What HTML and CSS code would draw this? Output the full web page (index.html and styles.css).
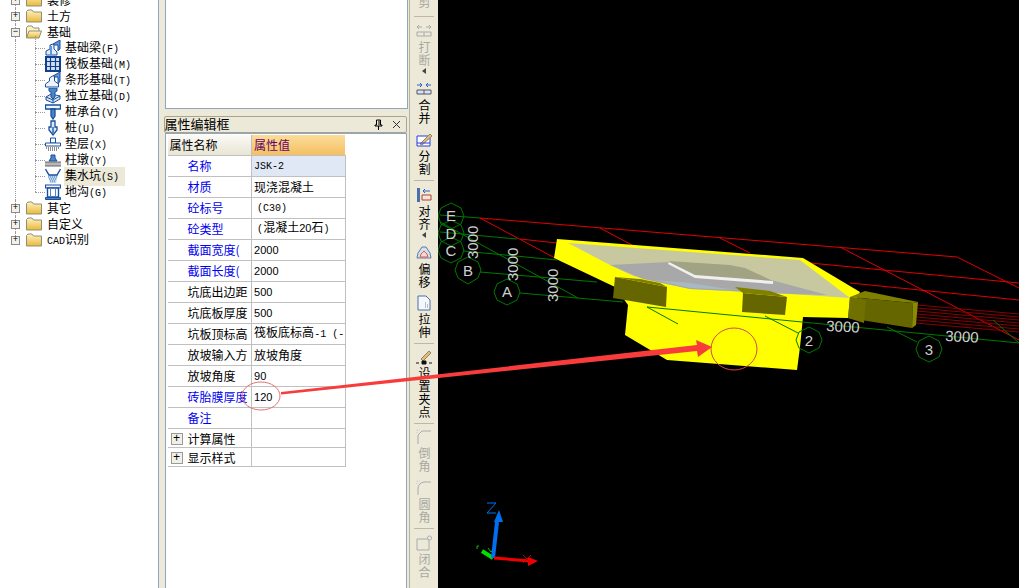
FILE: index.html
```html
<!DOCTYPE html>
<html lang="en">
<head>
    <meta charset="UTF-8">
    <meta name="viewport" content="width=device-width, initial-scale=1.0">
    <title>属性编辑框</title>
    <link rel="stylesheet" href="styles.css">
</head>
<body>
<div class="app">
    <!-- component tree -->
    <div class="tree">
        <div class="row cut"><span class="box">+</span><svg class="folder" viewBox="0 0 16 14"><use href="#folder"/></svg><span>装修</span></div>
        <div class="row"><span class="box">+</span><svg class="folder" viewBox="0 0 16 14"><use href="#folder"/></svg><span>土方</span></div>
        <div class="row"><span class="box">−</span><svg class="folder" viewBox="0 0 16 14"><use href="#folder-open"/></svg><span>基础</span></div>

        <div class="children">
            <div class="leaf"><svg class="ic" viewBox="0 0 16 16"><path d="M8 4l7-4v9l-2 2V5H9z" fill="#5f9ad8" stroke="#1a4f9c"/><path d="M1 15v-4l4-2V5l3-1 1 1v4l3 3v3z" fill="#e4eefa" stroke="#1a4f9c"/><path d="M6 6v9" stroke="#5f9ad8" stroke-width="2"/></svg><span>基础梁<i>(F)</i></span></div>
            <div class="leaf"><svg class="ic" viewBox="0 0 16 16"><path d="M1 1h14v14H1z" fill="#cfe0f2" stroke="#123f8c" stroke-width="2"/><path d="M5.500 1v14M10.500 1v14M1 5.500h14M1 10.500h14" stroke="#123f8c" stroke-width="1.200" fill="none"/></svg><span>筏板基础<i>(M)</i></span></div>
            <div class="leaf"><svg class="ic" viewBox="0 0 16 16"><path d="M8 4l7-4v9l-2 3V5H9z" fill="#5f9ad8" stroke="#1a4f9c"/><path d="M0.500 15v-3l4-3V6l3-2h2v5l4 3v3z" fill="#eef4fc" stroke="#1a4f9c"/></svg><span>条形基础<i>(T)</i></span></div>
            <div class="leaf"><svg class="ic" viewBox="0 0 16 16"><path d="M1 9l5-3 9 2v3l-7 4-7-3z" fill="#d4e4f6" stroke="#1a4f9c"/><path d="M4 0h8v3l-2 1v5l-2 2-2-2V4L4 3z" fill="#4a86c8" stroke="#1a4f9c"/><path d="M1 9l7 3 7-4M8 12v3" fill="none" stroke="#1a4f9c"/></svg><span>独立基础<i>(D)</i></span></div>
            <div class="leaf"><svg class="ic" viewBox="0 0 16 16"><path d="M0.500 1h15v4H0.500z" fill="#eef4fc" stroke="#1a4f9c" stroke-width="1.300"/><path d="M6 5h4v7l-2 3-2-3z" fill="#4a86c8" stroke="#1a4f9c" stroke-width="1.300"/></svg><span>桩承台<i>(V)</i></span></div>
            <div class="leaf"><svg class="ic" viewBox="0 0 16 16"><path d="M6 1h4v6h2v3l-4 5-4-5V7h2z" fill="#dce8f6" stroke="#1a4f9c" stroke-width="1.300"/><path d="M8 7v6" stroke="#4a86c8" stroke-width="2"/></svg><span>桩<i>(U)</i></span></div>
            <div class="leaf"><svg class="ic" viewBox="0 0 16 16"><path d="M5.500 2h5v5h-5z" fill="#fff" stroke="#1a4f9c"/><path d="M0.500 7h15v3h-15z" fill="#fff" stroke="#1a4f9c"/><path d="M1 12h14M3 14h10" stroke="#666" stroke-dasharray="1 1" stroke-width="1.500"/></svg><span>垫层<i>(X)</i></span></div>
            <div class="leaf"><svg class="ic" viewBox="0 0 16 16"><path d="M6 3h4v3l2 3H4l2-3z" fill="#4a86c8" stroke="#1a4f9c"/><path d="M0 10h16v4H0z" fill="#b8b8b8"/><path d="M0 10h16M0 14h16" stroke="#666"/></svg><span>柱墩<i>(Y)</i></span></div>
            <div class="leaf"><svg class="ic" viewBox="0 0 16 16"><path d="M3 7h10l-2 8H5z" fill="#bcd6f0"/><path d="M3 9h10M4 11h8M5 13h6" stroke="#3a78c0" stroke-dasharray="1 1"/><path d="M0.500 1L4 7h8l3.500-6" fill="none" stroke="#1a4f9c" stroke-width="1.400"/></svg><span class="selected">集水坑<i>(S)</i></span></div>
            <div class="leaf"><svg class="ic" viewBox="0 0 16 16"><path d="M0.500 1h15v3H0.500z" fill="#eef4fc" stroke="#1a4f9c" stroke-width="1.200"/><path d="M2.500 4h11v9h-11z" fill="#fff" stroke="#1a4f9c" stroke-width="1.400"/><path d="M5.500 4v9M10.500 4v9" stroke="#4a86c8"/><path d="M0.500 13.500h15v2h-15z" fill="#4a86c8" stroke="#1a4f9c"/></svg><span>地沟<i>(G)</i></span></div>
        </div>

        <div class="row"><span class="box">+</span><svg class="folder" viewBox="0 0 16 14"><use href="#folder"/></svg><span>其它</span></div>
        <div class="row"><span class="box">+</span><svg class="folder" viewBox="0 0 16 14"><use href="#folder"/></svg><span>自定义</span></div>
        <div class="row last"><span class="box">+</span><svg class="folder" viewBox="0 0 16 14"><use href="#folder"/></svg><span><i>CAD</i>识别</span></div>
    </div>

    <!-- middle panels -->
    <div class="middle">
        <div class="blank"></div>
        <div class="titlebar">
            <span class="title">属性编辑框</span>
            <span class="pin">
                <svg viewBox="0 0 9 11" width="9" height="11"><path d="M2.500 1h4v5h1.500v1H1V6h1.500zM4.500 7v4M5 1.500v4.500" fill="none" stroke="#000"/></svg>
                <svg viewBox="0 0 9 9" width="9" height="9"><path d="M1 1l7 7M8 1L1 8" stroke="#333"/></svg>
            </span>
        </div>
        <div class="props">
            <table>
                <tr class="head"><th class="h1">属性名称</th><th class="h2">属性值</th></tr>
                <tr><td class="k blue">名称</td><td class="v current"><i>JSK-2</i></td></tr>
                <tr><td class="k blue">材质</td><td class="v">现浇混凝土</td></tr>
                <tr><td class="k blue">砼标号</td><td class="v inset"><i>(C30)</i></td></tr>
                <tr><td class="k blue">砼类型</td><td class="v inset"><i>(</i>混凝土<u>20</u>石<i>)</i></td></tr>
                <tr><td class="k blue">截面宽度(</td><td class="v"><u>2000</u></td></tr>
                <tr><td class="k blue">截面长度(</td><td class="v"><u>2000</u></td></tr>
                <tr><td class="k">坑底出边距</td><td class="v"><u>500</u></td></tr>
                <tr><td class="k">坑底板厚度</td><td class="v"><u>500</u></td></tr>
                <tr><td class="k">坑板顶标高</td><td class="v">筏板底标高<i>-1 (-</i></td></tr>
                <tr><td class="k">放坡输入方</td><td class="v">放坡角度</td></tr>
                <tr><td class="k">放坡角度</td><td class="v"><u>90</u></td></tr>
                <tr><td class="k blue">砖胎膜厚度</td><td class="v"><u>120</u></td></tr>
                <tr><td class="k blue">备注</td><td class="v"></td></tr>
                <tr class="group"><td class="k"><span class="plus">+</span>计算属性</td><td class="v"></td></tr>
                <tr class="group"><td class="k"><span class="plus">+</span>显示样式</td><td class="v"></td></tr>
            </table>
        </div>
    </div>

    <!-- vertical toolbar -->
    <div class="toolbar">
        <div class="tool off first"><b>剪</b></div>
        <div class="sep"></div>
        <div class="tool off"><svg viewBox="0 0 16 16"><path d="M1 4h5M3 2L1 4l2 2M15 4h-5M13 2l2 2-2 2" fill="none" stroke="#aaa"/><path d="M1 9h14v4H1zM8 9v4" fill="none" stroke="#aaa"/></svg><b>打断</b><em class="arrow"></em></div>
        <div class="tool"><svg viewBox="0 0 16 16"><path d="M1 4h5M4 2l2 2-2 2M15 4h-5M12 2l-2 2 2 2" fill="none" stroke="#2a62c8"/><path d="M1 9h14v4H1zM8 9v4" fill="#d8e4f4" stroke="#556"/></svg><b>合并</b></div>
        <div class="tool pad7"><svg viewBox="0 0 16 16"><path d="M1 4h13v10H1z" fill="#fff" stroke="#2a3ae0"/><path d="M4 12L14 2l2 2L6 13z" fill="#e8b878" stroke="#886"/><path d="M1 11h13" stroke="#2a3ae0"/></svg><b>分割</b></div>
        <div class="sep"></div>
        <div class="tool"><svg viewBox="0 0 16 16"><path d="M1 1h3v14H1z" fill="#4a6ea8"/><path d="M6 8h9v5H6z" fill="#f4e8d8" stroke="#b04030"/><path d="M14 4H7M9 2L7 4l2 2" fill="none" stroke="#2a62c8"/></svg><b>对齐</b><em class="arrow"></em></div>
        <div class="tool"><svg viewBox="0 0 16 16"><path d="M1 13l1-5 4-6h4l4 6 1 5z" fill="#d4dff0" stroke="#5a7aa8"/><path d="M4 12l1-3 3-3 3 3 1 3z" fill="#f4d8d0" stroke="#d06050"/></svg><b>偏移</b></div>
        <div class="tool"><svg viewBox="0 0 16 16"><path d="M2 1h8l4 4v10H2z" fill="#f4f8fc" stroke="#4a6ea8"/><path d="M9 8h2M9 10h3M9 12h4" stroke="#789" stroke-dasharray="1 1"/></svg><b>拉伸</b></div>
        <div class="sep"></div>
        <div class="tool pad5"><svg viewBox="0 0 16 16"><path d="M5 10L13 2l2 2-8 8z" fill="#e8b878" stroke="#886"/><path d="M0 14h3M6 12h4v3H6zM13 14h3" stroke="#111" fill="#111"/></svg><b>设置夹点</b></div>
        <div class="sep"></div>
        <div class="tool off pad5"><svg viewBox="0 0 16 16"><path d="M2 15V6l4-4h9" fill="none" stroke="#aaa"/><path d="M1 1h4M1 1v4" stroke="#ccc" stroke-dasharray="1 1"/></svg><b>倒角</b></div>
        <div class="tool off pad7"><svg viewBox="0 0 16 16"><path d="M2 15V9q0-6 6-7h7" fill="none" stroke="#aaa"/><path d="M1 1h4M1 1v4" stroke="#ccc" stroke-dasharray="1 1"/></svg><b>圆角</b></div>
        <div class="sep"></div>
        <div class="tool off"><svg viewBox="0 0 16 16"><path d="M1 4h12v11H1z" fill="none" stroke="#aaa"/><circle cx="13.500" cy="3" r="2" fill="#eee" stroke="#aaa"/></svg><b>闭合</b></div>
    </div>

    <!-- 3D drawing -->
    <div class="view">
        <svg class="scene" viewBox="438 0 581 588" width="581" height="588">
            <g fill="none" stroke="#e00000">
                <path d="M480 218L957 257L1019 288M520 239L557 243M810 263L1019 283M850 283L1019 300M480 218L555 258M600 228L632 245M720 238L750 253M840 247L1019 340"/>
            </g>
            <g fill="none" stroke="#8a0000">
                <path d="M917 305L1019 314M917 308L1019 317M917 311L1019 320M917 314L1019 323M917 317L1019 326M917 320L1019 329M915 323L1019 332"/>
            </g>

            <!-- foundation pit -->
            <path d="M557 239L803 258L860 292L848 318L803 317L800 347L797 370L667 360L625 335L628 305L615 287L554 258z" fill="#ff0"/>
            <path d="M568 243L800 260L850 298L790 294L690 289L633 276L610 265z" fill="#c8c8a0"/>
            <path d="M610 265L668 262L775 281L827 295L790 294L730 291L690 289L643 279z" fill="#a8a8a8"/>
            <path d="M668 261L730 265L745 268L773 281L694 276z" fill="#a2a284"/>
            <path d="M669 262L695 275L773 281L773 284L695 278L668 264z" fill="#f0f0f0"/>
            <path d="M655 280L690 283L735 290L690 288z" fill="#a8b8c4"/>
            <path d="M615 277L667 287L666 307L613 298z" fill="#666600"/>
            <path d="M615 277L640 279L660 283L667 287z" fill="#808000"/>
            <path d="M743 293L787 297L785 315L742 312z" fill="#666600"/>
            <path d="M735 287L770 291L787 297L743 293z" fill="#808000"/>
            <path d="M850 297L865 291L918 302L913 303z" fill="#808000"/>
            <path d="M850 297L913 303L912 328L848 318z" fill="#666600"/>
            <path d="M850 297L866 300L864 323L848 318z" fill="#707000"/>
            <path d="M913 303L918 302L916 325L912 328z" fill="#8a8a00"/>

            <g fill="none" stroke="#007a00">
                <path d="M440 215L480 218M440 232L517 239M463 251L557 260M480 272L597 282M520 293L623 302M647 307L1019 343M440 222L578 298M647 307L678 324M765 316L798 333M887 327L917 342M993 320L1019 343"/>
                <path d="M451 203L461 208L464 216L461 224L451 229L441 224L438 216L441 208z"/>
                <path d="M451 220L461 225L464 233L461 241L451 246L441 241L438 233L441 225z"/>
                <path d="M451 237L461 242L464 250L461 258L451 263L441 258L438 250L441 242z"/>
                <path d="M468 257L478 262L481 270L478 278L468 284L458 278L455 270L458 262z"/>
                <path d="M507 279L517 284L520 292L517 300L507 305L497 300L494 292L497 284z"/>
                <path d="M809 327L819 332L822 340L819 348L809 353L799 348L796 340L799 332z"/>
                <path d="M929 336L939 341L942 349L939 357L929 362L919 357L916 349L919 341z"/>
            </g>
            <g class="grid-text">
                <text x="451" y="221">E</text>
                <text x="451" y="239">D</text>
                <text x="451" y="256">C</text>
                <text x="468" y="276">B</text>
                <text x="507" y="297">A</text>
                <text x="809" y="346">2</text>
                <text x="929" y="355">3</text>
                <text transform="translate(478 259) rotate(-90)">3000</text>
                <text transform="translate(518 281) rotate(-90)">3000</text>
                <text transform="translate(558 302) rotate(-90)">3000</text>
                <text transform="translate(826 331) rotate(3)">3000</text>
                <text transform="translate(945 341) rotate(3)">3000</text>
            </g>

            <!-- axes -->
            <path d="M482 551L493 558" stroke="#00e000" stroke-width="4"/>
            <path d="M477 549v-3h2M488 548l3 4 4-4" fill="none" stroke="#00c000"/>
            <path d="M493 558L497 522" stroke="#0070f0" stroke-width="4"/>
            <path d="M499 510L503 522H494z" fill="#0070f0"/>
            <path d="M487 503h9L487 513h9" fill="none" stroke="#0070f0"/>
            <path d="M494 558L530 561" stroke="#f00000" stroke-width="3"/>
            <path d="M538 561L528 557V566z" fill="#f00000"/>
            <path d="M523 555l8 8M531 555l-8 8" stroke="#c00000"/>
        </svg>
    </div>
</div>

<!-- annotation drawn over the screenshot -->
<svg class="marks" viewBox="0 0 1019 588" width="1019" height="588">
    <ellipse cx="261" cy="396" rx="19" ry="14" fill="none" stroke="#e87070"/>
    <ellipse cx="734" cy="349" rx="23" ry="21" fill="none" stroke="#d84848"/>
    <path d="M281 392L697 345L696 340L712 347L698 357L697 351L281 394.500z" fill="#f83c3c"/>
</svg>

<svg class="defs" width="0" height="0">
    <defs>
        <linearGradient id="fg" x1="0" y1="0" x2="0" y2="1"><stop offset="0" stop-color="#fff3c4"/><stop offset="1" stop-color="#e8b838"/></linearGradient>
        <symbol id="folder" viewBox="0 0 16 14"><path d="M.5 13V2.500L2 1h4l1.500 2H15.500V13z" fill="url(#fg)" stroke="#8f8f78"/></symbol>
        <symbol id="folder-open" viewBox="0 0 16 14"><path d="M.5 13V2.500L2 1h4l1.500 2H13V6" fill="#fff3c4" stroke="#8f8f78"/><path d="M.5 13L3 6h12.500L13 13z" fill="url(#fg)" stroke="#8f8f78"/></symbol>
    </defs>
</svg>
</body>
</html>
```

FILE: styles.css
```css
* {
    box-sizing: border-box;
    margin: 0;
    padding: 0;
}

html, body {
    width: 1019px;
    height: 588px;
    overflow: hidden;
}

body {
    position: relative;
    font-family: "Noto Sans CJK SC", "Liberation Sans", sans-serif;
    font-size: 12px;
    color: #000;
    background: #ece9d8;
}

i {
    font-family: "Liberation Mono", monospace;
    font-size: 10px;
    font-style: normal;
}

/* plain digits in the value column */
u {
    font-family: "Liberation Sans", sans-serif;
    font-size: 11px;
    text-decoration: none;
}

.app {
    display: flex;
    height: 588px;
}

/* tree */
.tree {
    width: 159px;
    background: #fff;
    border-right: 1px solid #8fa6c0;
    padding-top: 0;
    overflow: hidden;
}

.row {
    display: flex;
    align-items: center;
    height: 16px;
    line-height: 16px;
    padding-left: 11px;
    position: relative;
}

.row.cut {
    margin-top: -8px;
}

.row::before {
    content: "";
    position: absolute;
    left: 15px;
    top: 0;
    bottom: 0;
    border-left: 1px dotted #999;
}

.row.last::before {
    bottom: 8px;
}

.box {
    width: 9px;
    height: 9px;
    border: 1px solid #8a8a8a;
    background: #f2f2ea;
    font: 9px/7px "Liberation Mono", monospace;
    text-align: center;
    position: relative;
    margin-right: 6px;
}

.folder {
    width: 16px;
    height: 14px;
    margin-right: 5px;
}

.children {
    position: relative;
    padding-left: 35px;
}

.children::before {
    content: "";
    position: absolute;
    left: 15px;
    top: 0;
    bottom: 0;
    border-left: 1px dotted #999;
}

.children::after {
    content: "";
    position: absolute;
    left: 35px;
    top: -4px;
    bottom: 8px;
    border-left: 1px dotted #999;
}

.leaf {
    display: flex;
    align-items: center;
    height: 16px;
    line-height: 16px;
    padding-left: 10px;
    position: relative;
    gap: 3px;
}

.leaf::before {
    content: "";
    position: absolute;
    left: 0;
    width: 10px;
    top: 8px;
    border-top: 1px dotted #999;
}

.ic {
    width: 16px;
    height: 16px;
    position: relative;
}

.leaf > span {
    padding: 0 1px;
    white-space: nowrap;
}

.selected {
    background: #ece9d8;
    width: 61px;
}

/* middle */
.middle {
    width: 250px;
    padding-left: 6px;
    display: flex;
    flex-direction: column;
}

.blank {
    width: 243px;
    height: 109px;
    background: #fff;
    border: 1px solid #8fa6c0;
    border-top: 0;
    flex: none;
}

.titlebar {
    width: 243px;
    height: 17px;
    margin-top: 7px;
    margin-left: -1px;
    display: flex;
    justify-content: space-between;
    align-items: center;
    border: 1px solid #a8a490;
    border-radius: 2px;
    flex: none;
}

.title {
    font-size: 13px;
    line-height: 13px;
    padding-bottom: 3px;
}

.pin {
    display: flex;
    align-items: center;
    gap: 9px;
    padding-right: 5px;
}

.props {
    flex: 1;
    width: 242px;
    background: #fff;
    border: 1px solid #8fa6c0;
    border-bottom: 0;
    padding: 1px 2px;
}

table {
    border-collapse: collapse;
    table-layout: fixed;
    width: 178px;
}

tr {
    height: 21px;
}

tr.head {
    height: 20px;
}

tr.group {
    height: 19px;
}

td, th {
    border: 1px solid #c0c0c0;
    border-left: 0;
    font-weight: normal;
    text-align: left;
    white-space: nowrap;
    overflow: hidden;
    line-height: 14px;
}

th {
    border-top: 0;
}

.h1 {
    width: 84px;
    padding-left: 2px;
    background: linear-gradient(#fbfaf6, #e8e5d4);
}

.h2 {
    padding-left: 2px;
    color: #660066;
    background: linear-gradient(#fbdc9c, #f4c060);
    border-right: 0;
}

.k {
    padding-left: 20px;
}

.v {
    padding-left: 2px;
}

.inset {
    padding-left: 5px;
}

.group .k {
    padding: 2px 0 0 3px;
    line-height: 12px;
}

.blue {
    color: #0000f0;
}

.current {
    background: #dfe8f4;
}

.plus {
    display: inline-block;
    width: 12px;
    height: 12px;
    border: 1px solid #9a9a9a;
    background: #f0efe8;
    font: 12px/10px "Liberation Mono", monospace;
    text-align: center;
    margin-right: 5px;
    vertical-align: top;
}

/* toolbar */
.toolbar {
    width: 29px;
    margin-left: 1px;
    border-left: 1px solid #b8b4a0;
    display: flex;
    flex-direction: column;
    align-items: center;
    flex: none;
}

.tool {
    display: flex;
    flex-direction: column;
    align-items: center;
    width: 100%;
    padding-top: 6px;
}

.tool.pad5 {
    padding-top: 5px;
}

.tool.pad7 {
    padding-top: 7px;
}

.tool svg {
    width: 16px;
    height: 16px;
    margin-bottom: 2px;
}

.tool b {
    font-weight: normal;
    writing-mode: vertical-rl;
    text-orientation: upright;
    letter-spacing: 1px;
    line-height: 16px;
}

.tool.first {
    margin-top: -4px;
    padding-top: 0;
    height: 16px;
}

.off {
    color: #a8a8a0;
}

.arrow {
    width: 0;
    height: 0;
    margin: 1px 0;
    border: 3px solid transparent;
    border-right: 4px solid #444;
    border-left: 0;
}

.sep {
    width: 20px;
    height: 1px;
    margin-top: 4px;
    background: #bdb9a6;
    flex: none;
}

/* drawing */
.view {
    flex: 1;
    background: #000;
}

.scene {
    display: block;
}

.grid-text text {
    fill: #d0d0d0;
    font-family: "Liberation Sans", sans-serif;
    font-size: 15px;
    text-anchor: middle;
}

.grid-text text[transform] {
    text-anchor: start;
}

.marks {
    position: absolute;
    left: 0;
    top: 0;
    pointer-events: none;
}

.defs {
    position: absolute;
}
```
